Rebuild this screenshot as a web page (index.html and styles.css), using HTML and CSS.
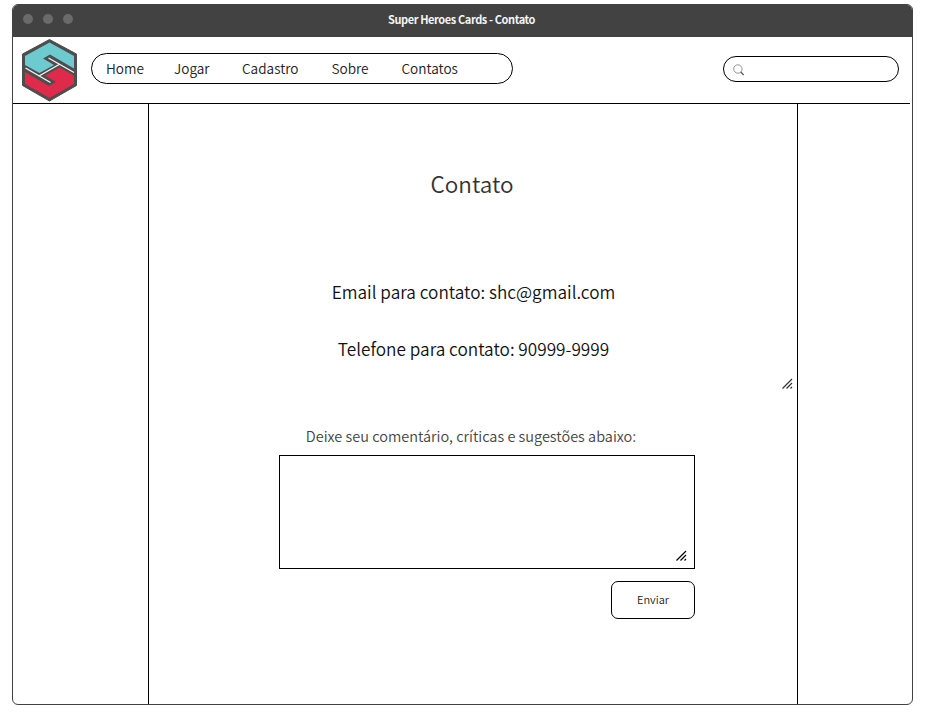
FILE: index.html
```
<!DOCTYPE html>
<html lang="pt-BR">
<head>
<meta charset="utf-8">
<title>Super Heroes Cards - Contato</title>
<link rel="stylesheet" href="styles.css">
</head>
<body>
<div class="window">
  <div class="titlebar">
    <div class="dots"><i></i><i></i><i></i></div>
    <span class="window-title">Super Heroes Cards - Contato</span>
  </div>
  <div class="page">
    <header class="header">
      <svg class="logo" width="58" height="65" viewBox="0 0 58 65">
        <path d="M29.500 1.500 56.500 16V47.500L29.500 63 2.500 47.500V16Z" fill="#4d4d4d" stroke="#4d4d4d" stroke-width="1" stroke-linejoin="round"/>
        <path d="M29.500 4.500 54 18V30.500L30 16.500 23 20.500 34 27 19.500 35 5 27V18Z" fill="#6dcbd0"/>
        <path d="M29.500 60 5 46V34L29 48 36 44 25 37.500 39.500 29.500 54 37.500V46Z" fill="#df2a4b"/>
        <path d="M5.500 30 30.500 44.500M28.500 20 54 34.500M19 38 40 26" fill="none" stroke="#f4f4f4" stroke-width="1.400"/>
      </svg>
      <nav class="nav">
        <a>Home</a><a>Jogar</a><a>Cadastro</a><a>Sobre</a><a>Contatos</a>
      </nav>
      <div class="search">
        <svg width="12" height="12" viewBox="0 0 12 12" fill="none" stroke="#777"><circle cx="4.900" cy="5" r="4.200" stroke-width=".8"/><path d="m7.700 8 3 3" stroke="#555" stroke-width="1.200"/></svg>
      </div>
    </header>
    <div class="columns">
      <aside></aside>
      <main class="content">
        <h1>Contato</h1>
        <section class="info">
          <p>Email para contato: shc@gmail.com</p>
          <p class="phone">Telefone para contato: 90999-9999</p>
          <svg class="grip" width="11" height="11" viewBox="0 0 11 11" stroke="#333" fill="none"><path d="M.5 10.500 10 1M4.500 10.500 10 5M8.500 10.500 10 9" stroke-width="1.200"/></svg>
        </section>
        <form>
          <p class="label">Deixe seu comentário, críticas e sugestões abaixo:</p>
          <div class="textarea">
            <svg width="11" height="11" viewBox="0 0 11 11" stroke="#000" fill="none"><path d="M.5 10.500 10 1M4.500 10.500 10 5M8.500 10.500 10 9" stroke-width="1.200"/></svg>
          </div>
          <button type="button">Enviar</button>
        </form>
      </main>
      <aside></aside>
    </div>
  </div>
</div>
</body>
</html>
```
FILE: styles.css
```
* { box-sizing: border-box; }
body { margin: 0; background: #fff; color: #111; font-family: "Noto Sans CJK SC", "Open Sans", sans-serif; font-weight: 350; }
p, h1 { margin: 0; text-align: center; }
.window { width: 901px; height: 701px; margin: 4px 0 0 12px; border: 1px solid #424242; border-radius: 6px; overflow: hidden; display: flex; flex-direction: column; }
.titlebar { height: 32px; flex: none; background: #424242; display: grid; grid-template-columns: 1fr auto 1fr; align-items: center; }
.dots { display: flex; gap: 10px; padding-left: 10.4px; }
.dots i { width: 10px; height: 10px; border-radius: 50%; background: #6a6a6a; margin-top: -4px; }
.window-title { color: #f4f4f4; font-size: 11px; font-weight: 700; letter-spacing: -.4px; line-height: 16px; margin: -4px 2px 0 0; }
.page { flex: 1; display: flex; flex-direction: column; }
.header { height: 67px; width: 897px; flex: none; border-bottom: 1px solid #000; display: flex; align-items: flex-start; }
.logo { margin: 1px 0 0 7px; }
.nav { margin: 16px 0 0 13px; width: 422px; height: 31px; border: 1px solid #000; border-radius: 16px; padding-left: 14px; display: grid; grid-template-columns: 68px 68px 89.5px 70px auto; font-size: 13.6px; line-height: 29px; color: #222; }
.search { margin: 19px 11px 0 auto; width: 176px; height: 26px; border: 1px solid #000; border-radius: 13px; padding: 7px 0 0 9px; display: flex; }
.columns { flex: 1; display: grid; grid-template-columns: 135px 650px 1fr; }
.content { border: solid #000; border-width: 0 1px; }
h1 { padding: 59px 2px 0 0; font-size: 22.5px; font-weight: 350; line-height: 40px; color: #333; }
.info { position: relative; height: 190px; padding-top: 74px; }
.info p { font-size: 17.2px; line-height: 30px; padding-left: 1px; }
.info .phone { margin-top: 27px; }
.grip { position: absolute; right: 4px; bottom: 4px; }
form { width: 416px; margin-left: 130px; padding-top: 32px; display: flex; flex-direction: column; }
.label { font-size: 14.5px; line-height: 22px; color: #444; padding-right: 32px; }
.textarea { height: 114px; margin-top: 8px; border: 1px solid #000; display: flex; align-items: flex-end; justify-content: flex-end; padding: 0 7px 7px; }
button { width: 84px; height: 38px; align-self: flex-end; margin-top: 12px; border: 1px solid #000; border-radius: 7px; background: #fff; padding: 0 0 2px; color: #222; font: 350 11px "Noto Sans CJK SC", sans-serif; }
```
